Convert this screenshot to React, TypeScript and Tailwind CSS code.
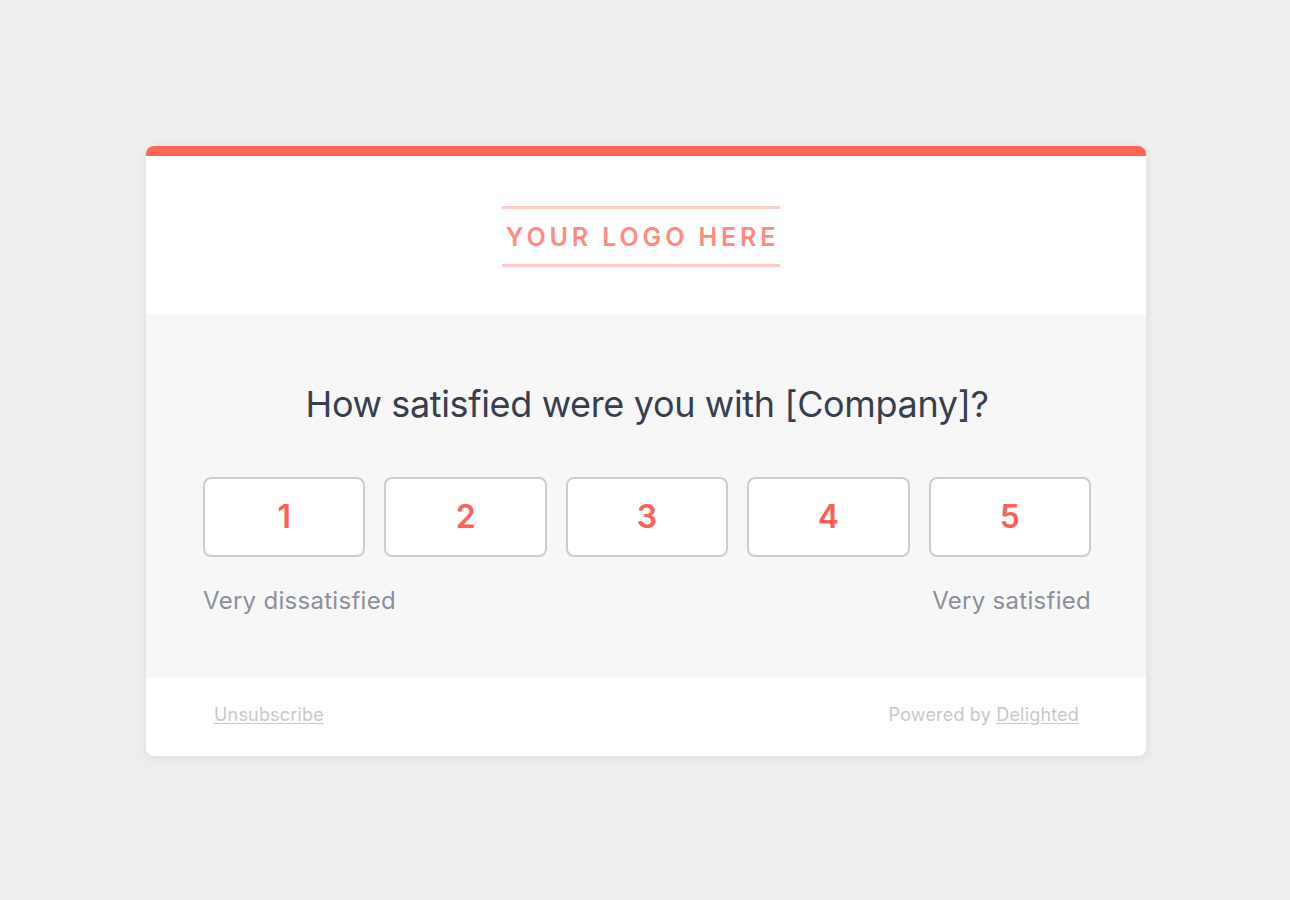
export default function App() {
  const scores = [1, 2, 3, 4, 5];
  return (
    <main
      className="min-h-screen w-full bg-[#eeeeee] pt-[146px] pl-[146px]"
      style={{ fontFamily: "Inter, 'Liberation Sans', sans-serif" }}
    >
      <div className="w-[1000px] overflow-hidden rounded-lg bg-white shadow-[0_2px_10px_rgba(0,0,0,0.08)]">
        {/* Accent bar */}
        <div className="h-[10px] bg-[#ff6559]" />

        {/* Logo */}
        <div className="flex h-[158px] items-center justify-center pt-[2px]">
          <div className="mr-[10px] flex w-[278px] flex-col items-center border-y-[3px] border-[#ffcdc8] pt-[14px] pb-[13px]">
            <span className="pl-[3px] text-[25px] leading-[28px] font-semibold tracking-[0.155em] whitespace-nowrap text-[#ff8a80]">
              YOUR LOGO HERE
            </span>
          </div>
        </div>

        {/* Survey */}
        <div className="bg-[#f7f7f7] pt-[68px] pr-[55px] pb-[61px] pl-[57px]">
          <h1 className="text-center text-[36px] leading-[44px] font-normal tracking-[-0.01em] text-[#373f4f]">
            How satisfied were you with [Company]?
          </h1>
          <div className="mt-[51px] grid grid-cols-5 gap-[19px]">
            {scores.map((n) => (
              <button
                key={n}
                className="flex h-[80px] items-center justify-center rounded-lg border-2 border-[#cdcdcd] bg-white text-[32px] font-semibold text-[#ff5f57]"
              >
                {n}
              </button>
            ))}
          </div>
          <div className="mt-[28px] flex justify-between text-[24px] leading-[32px] tracking-[0.012em] text-[#8b909c]">
            <span>Very dissatisfied</span>
            <span>Very satisfied</span>
          </div>
        </div>

        {/* Footer */}
        <div className="flex h-[78px] items-center justify-between pr-[67px] pb-[5px] pl-[68px] text-[18px] tracking-[0.01em] text-[#c9c9c9]">
          <a href="#" className="underline underline-offset-2">
            Unsubscribe
          </a>
          <span>
            Powered by{" "}
            <a href="#" className="underline underline-offset-2">
              Delighted
            </a>
          </span>
        </div>
      </div>
    </main>
  );
}
